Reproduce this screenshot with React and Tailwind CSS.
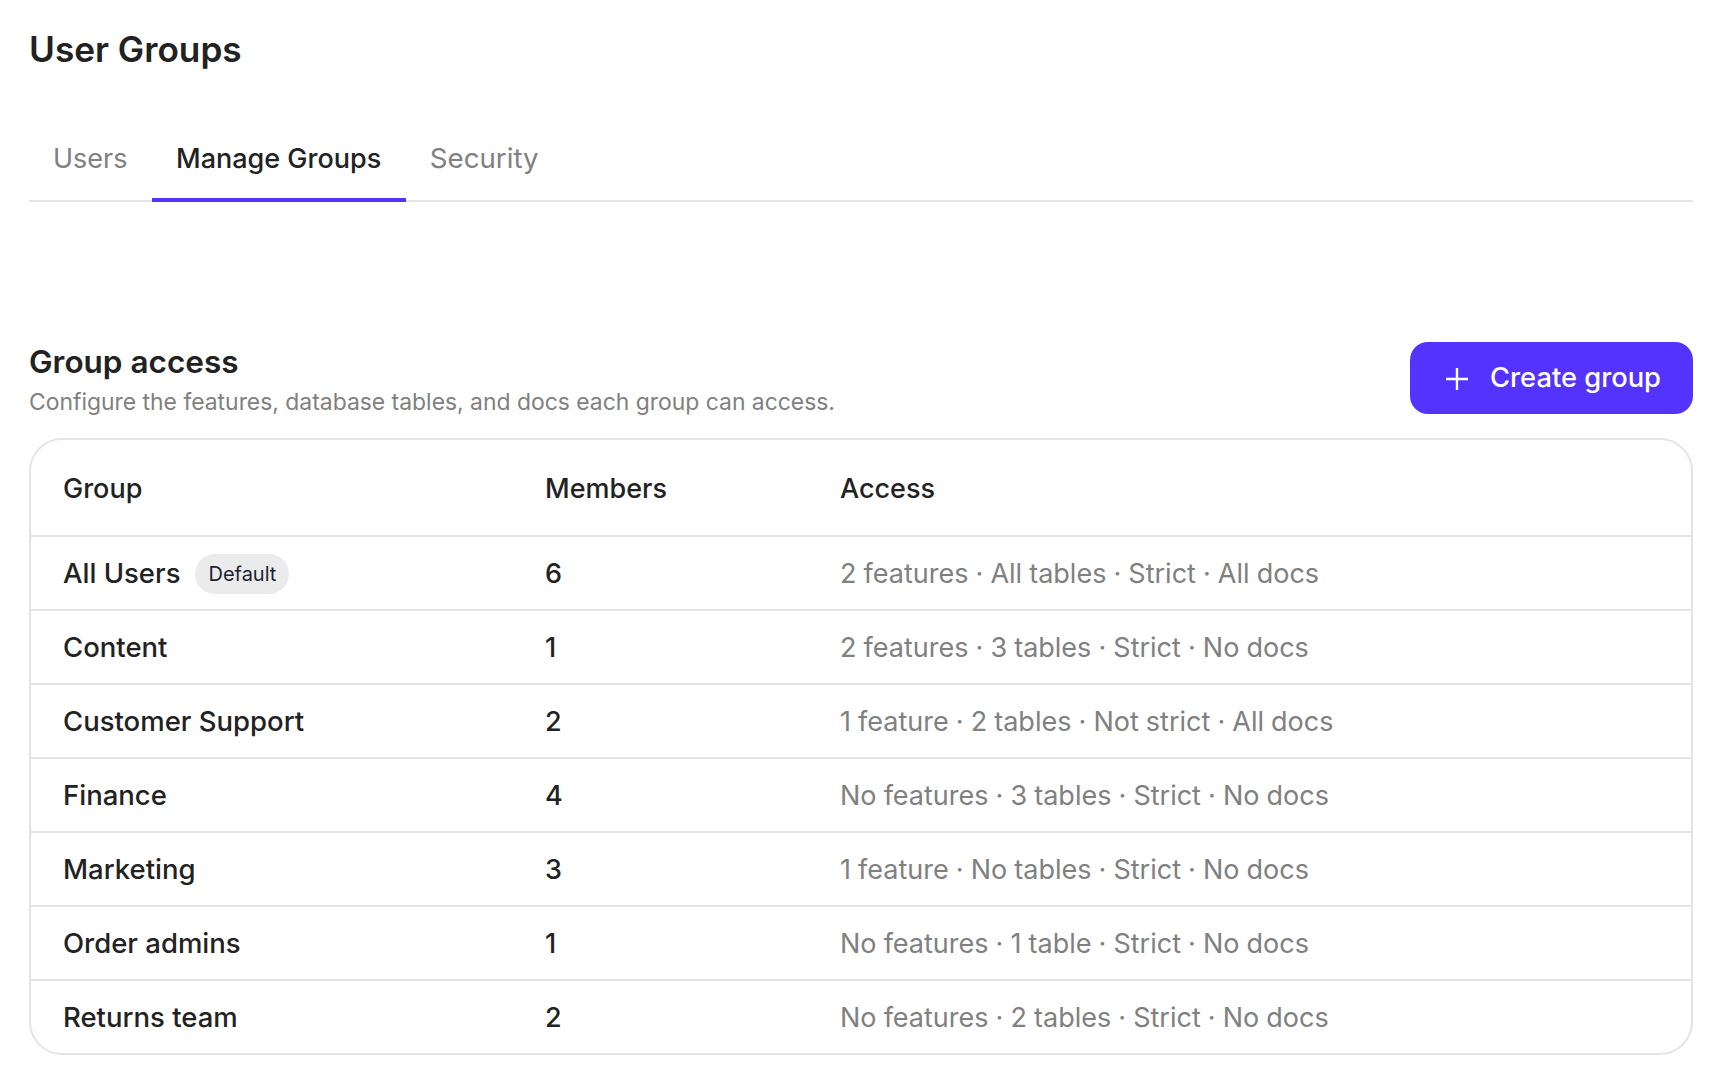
import React from "react";

const rows = [
  ["All Users", "6", "2 features · All tables · Strict · All docs", true],
  ["Content", "1", "2 features · 3 tables · Strict · No docs"],
  ["Customer Support", "2", "1 feature · 2 tables · Not strict · All docs"],
  ["Finance", "4", "No features · 3 tables · Strict · No docs"],
  ["Marketing", "3", "1 feature · No tables · Strict · No docs"],
  ["Order admins", "1", "No features · 1 table · Strict · No docs"],
  ["Returns team", "2", "No features · 2 tables · Strict · No docs"],
];

export default function App() {
  return (
    <div className="min-h-[1086px] bg-white pl-[29px] pr-[37px] font-['Inter',sans-serif] text-[#222222]">
      <h1 className="h-[100px] pt-[28px] text-[35.2px] leading-[42px] font-semibold">User Groups</h1>
      <div className="flex h-[102px] border-b-2 border-[#e4e4e4]">
        <div className="flex h-[102px] items-center px-6 pt-[16px] text-[27px] text-[#808080]">Users</div>
        <div className="flex h-[102px] items-center border-b-4 border-[#5533ff] px-[24.5px] pt-[20px] text-[27px] font-medium">Manage Groups</div>
        <div className="flex h-[102px] items-center px-6 pt-[16px] text-[27.7px] text-[#808080]">Security</div>
      </div>
      <div className="mt-[140px] flex items-start justify-between">
        <div>
          <h2 className="text-[31.5px] leading-[40px] font-semibold">Group access</h2>
          <p className="mt-[1px] text-[22.9px] leading-[38px] text-[#808080]">Configure the features, database tables, and docs each group can access.</p>
        </div>
        <button className="flex h-[72px] w-[283px] items-center justify-center gap-[20px] rounded-[18px] bg-[#5533ff] pt-[1px] pl-[2px] text-[27.3px] font-medium text-white">
          <svg width="26" height="26" viewBox="0 0 26 26" fill="none" stroke="currentColor" strokeWidth="2.4">
            <path d="M13 2v22M2 13h22" />
          </svg>
          Create group
        </button>
      </div>
      <div className="mt-[17px] overflow-hidden rounded-[33px] border-2 border-[#e4e4e4]">
        <div className="grid h-[95px] grid-cols-[482px_295px_1fr] items-center pt-[3px] pl-[32px] text-[27px] font-medium">
          <div>Group</div>
          <div>Members</div>
          <div>Access</div>
        </div>
        {rows.map(([name, count, access, isDefault]) => (
          <div key={name} className="grid h-[74px] grid-cols-[482px_295px_1fr] items-center border-t-2 border-[#e4e4e4] pt-[2px] pl-[32px] text-[27px]">
            <div className="flex items-center gap-[15px] text-[27.5px] font-medium">
              {name}
              {isDefault && (
                <span className="flex h-[40px] items-center rounded-full bg-[#ebebeb] px-[13px] text-[20px] font-normal text-[#1a1f36]">Default</span>
              )}
            </div>
            <div className="font-medium">{count}</div>
            <div className="text-[#808080] [word-spacing:-0.5px]">{access}</div>
          </div>
        ))}
      </div>
    </div>
  );
}
